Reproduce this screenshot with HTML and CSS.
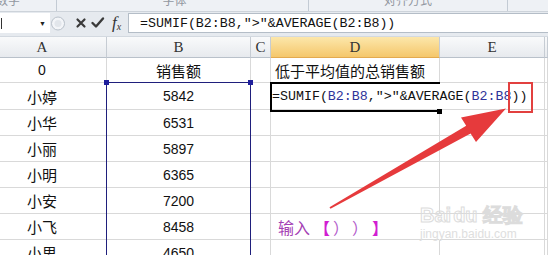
FILE: index.html
```html
<!DOCTYPE html>
<html>
<head>
<meta charset="utf-8">
<link rel="stylesheet" href="styles.css">
</head>
<body>
<div class="ribbon">
  <div class="grp g1"><span>数字</span></div>
  <div class="grp g2"><span>字体</span></div>
  <div class="grp g3"><span>对齐方式</span></div>
</div>

<div class="fbar">
  <div class="namebox"><i class="cut"></i><span class="drop">▼</span></div>
  <div class="tools">
    <svg width="56" height="21" viewBox="0 0 56 21">
      <circle cx="8" cy="10.5" r="6.5" fill="#f3f5f8" stroke="#b9c1ca"/>
      <circle cx="8" cy="10.5" r="3.5" fill="#e2e6eb"/>
      <path d="M27.5 6.5 L34.5 13.5 M34.5 6.5 L27.5 13.5" stroke="#3a3a3a" stroke-width="2.2" stroke-linecap="round"/>
      <path d="M42.5 10 L46 13.5 L53 5.5" stroke="#3a3a3a" stroke-width="2.4" fill="none" stroke-linecap="round" stroke-linejoin="round"/>
    </svg>
    <span class="fx">f<sub>x</sub></span>
  </div>
  <div class="formula">=SUMIF(B2:B8,"&gt;"&amp;AVERAGE(B2:B8))</div>
</div>

<div class="viewport">
<div class="sheet">
  <div class="hd">A</div>
  <div class="hd">B</div>
  <div class="hd">C</div>
  <div class="hd sel">D</div>
  <div class="hd">E</div>
  <div class="hd"></div>

  <div class="c num">0</div>
  <div class="c">销售额</div>
  <div class="c"></div>
  <div class="c left title">低于平均值的总销售额</div>
  <div class="c"></div>
  <div class="c"></div>

  <div class="c">小婷</div>
  <div class="c num">5842</div>
  <div class="c"></div>
  <div class="c left ovf code">=SUMIF(<span class="ref">B2:B8</span>,"&gt;"&amp;AVERAGE(<span class="ref">B2:B8</span>))</div>
  <div class="c"></div>
  <div class="c"></div>

  <div class="c">小华</div>
  <div class="c num">6531</div>
  <div class="c"></div>
  <div class="c"></div>
  <div class="c"></div>
  <div class="c"></div>

  <div class="c">小丽</div>
  <div class="c num">5897</div>
  <div class="c"></div>
  <div class="c"></div>
  <div class="c"></div>
  <div class="c"></div>

  <div class="c">小明</div>
  <div class="c num">6365</div>
  <div class="c"></div>
  <div class="c"></div>
  <div class="c"></div>
  <div class="c"></div>

  <div class="c">小安</div>
  <div class="c num">7200</div>
  <div class="c"></div>
  <div class="c"></div>
  <div class="c"></div>
  <div class="c"></div>

  <div class="c">小飞</div>
  <div class="c num">8458</div>
  <div class="c"></div>
  <div class="c left ovf note"><span class="in">输入</span><span class="br">【</span><span class="pa">）</span><span class="pa">）</span><span class="br">】</span></div>
  <div class="c"></div>
  <div class="c"></div>

  <div class="c">小思</div>
  <div class="c num">4650</div>
  <div class="c"></div>
  <div class="c"></div>
  <div class="c"></div>
  <div class="c"></div>
</div>
</div>

<!-- selection and markup drawn over the sheet -->
<div class="range"><i class="hdl h1"></i><i class="hdl h2"></i></div>
<div class="active"><i class="fill"></i></div>
<div class="redbox"></div>

<svg class="arrow" width="548" height="255" viewBox="0 0 548 255">
  <polygon points="329.5,207.3 466.2,125.8 461,117.5 506,108.5 476,142 470.6,133.6 330.5,208.7" fill="#e63a3c"/>
</svg>

<div class="mark">
  <div class="logo">Bai<span class="paw">du</span> 经验</div>
  <div class="url">jingyan.baidu.com</div>
</div>
</body>
</html>
```

FILE: styles.css
```css
body {
  margin: 0;
  width: 548px;
  height: 255px;
  overflow: hidden;
  position: relative;
  background: #fff;
  font-family: "Liberation Sans", Arial, sans-serif;
}

/* ribbon bottom edge */
.ribbon {
  height: 12px;
  display: flex;
  overflow: hidden;
  background: #eef1f5;
  border-bottom: 1px solid #cdd3da;
  box-sizing: border-box;
}

.grp {
  box-sizing: border-box;
  border-right: 1px solid #c3cbd4;
  text-align: center;
  font-family: "Noto Sans CJK SC", sans-serif;
  font-size: 12px;
  line-height: 12px;
  color: #9297a0;
}

.grp span {
  display: block;
  margin-top: -6px;
}

.g1 { width: 97px; margin-left: -40px; }
.g2 { width: 252px; padding-right: 16px; }
.g3 { width: 199px; }

/* formula bar */
.fbar {
  height: 25px;
  display: flex;
  box-sizing: border-box;
  padding: 1px 0 3px;
  background: #e6eaef;
  border-bottom: 1px solid #d3d9e0;
}

.namebox {
  width: 50px;
  background: #fff;
  display: flex;
  align-items: center;
  justify-content: space-between;
  padding-right: 4px;
  box-sizing: border-box;
}

.cut {
  width: 1px;
  height: 11px;
  margin-left: 1px;
  background: #333;
}

.drop {
  font-size: 7px;
  color: #222;
}

.tools {
  width: 78px;
  display: flex;
  align-items: center;
}

.fx {
  font-family: "Liberation Serif", serif;
  font-style: italic;
  font-size: 17px;
  color: #333;
  margin-left: 6px;
  line-height: 1;
}

.fx sub {
  font-size: 10px;
  vertical-align: -2px;
}

.formula {
  flex: 1;
  background: #fff;
  border: 1px solid #b4bdc7;
  border-right: none;
  padding-left: 11px;
  font-family: "Liberation Mono", monospace;
  font-size: 13.3px;
  line-height: 19px;
  color: #111;
  white-space: nowrap;
}

/* worksheet */
.viewport {
  height: 218px;
  overflow: hidden;
}

.sheet {
  display: grid;
  grid-template-columns: 129px 144px 20px 169px 105px 3px;
  grid-template-rows: 21px 25px 27px repeat(6, 26px);
  margin-left: -22px;
}

.hd {
  background: linear-gradient(#f9fafb, #e7eaee);
  border-right: 1px solid #c6ccd3;
  border-bottom: 1px solid #b9c1ca;
  display: flex;
  align-items: center;
  justify-content: center;
  font-family: "Liberation Serif", serif;
  font-size: 15px;
  color: #333;
}

.hd.sel {
  background: linear-gradient(#fce7ab, #f5c76b);
  border-bottom-color: #e3aa4f;
}

.c {
  border-right: 1px solid #d9d9d9;
  border-bottom: 1px solid #d9d9d9;
  display: flex;
  align-items: center;
  justify-content: center;
  font-family: "Noto Sans CJK SC", sans-serif;
  font-size: 15px;
  color: #111;
  white-space: nowrap;
}

.c.num {
  font-family: "Liberation Sans", Arial, sans-serif;
  font-size: 14px;
}

.c.left {
  justify-content: flex-start;
}

.title {
  padding-left: 4px;
}

.ovf {
  overflow: visible;
  border-right-color: transparent;
}

.code {
  padding-left: 1px;
  font-family: "Liberation Mono", monospace;
  font-size: 13.3px;
}

.ref {
  color: #2f3399;
}

.note {
  padding-left: 7px;
  font-size: 16px;
}

.note .in { color: #a440b4; }
.note .br { color: #d21ed2; font-weight: bold; margin-left: 4px; }
.note .pa { color: #b35ccb; margin-left: 3px; }

/* overlays */
.range {
  position: absolute;
  left: 106px;
  top: 82px;
  width: 145px;
  height: 173px;
  border: 1.5px solid #1f1f7c;
  border-bottom: none;
  box-sizing: border-box;
}

.hdl {
  position: absolute;
  top: -3px;
  width: 5px;
  height: 5px;
  background: #1f1f9c;
}

.h1 { left: -3px; }
.h2 { right: -3px; }

.active {
  position: absolute;
  left: 270px;
  top: 82px;
  width: 170px;
  height: 30px;
  border: 2px solid #000;
  border-right: none;
  box-sizing: border-box;
}

.fill {
  position: absolute;
  right: -2px;
  bottom: -4px;
  width: 5px;
  height: 5px;
  background: #000;
}

.redbox {
  position: absolute;
  left: 508px;
  top: 82px;
  width: 25px;
  height: 31px;
  border: 2.5px solid #e2403f;
  box-sizing: border-box;
}

.arrow {
  position: absolute;
  left: 0;
  top: 0;
}

.mark {
  position: absolute;
  left: 420px;
  top: 203px;
  color: #e2e2e2;
}

.logo {
  font-family: "Liberation Sans", sans-serif;
  font-weight: bold;
  font-size: 20px;
  line-height: 24px;
  color: transparent;
  -webkit-text-stroke: 1px #dcdcdc;
}

.paw {
  margin-left: 2px;
}

.url {
  font-family: "Liberation Sans", sans-serif;
  font-size: 12px;
  line-height: 14px;
  color: #dedede;
}
```
